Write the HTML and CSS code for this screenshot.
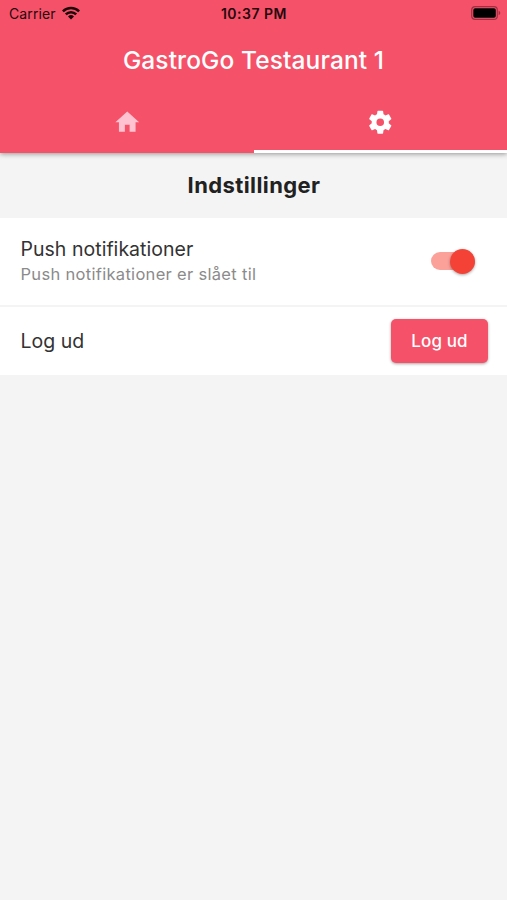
FILE: index.html
```html
<!DOCTYPE html>
<html lang="da">
<head>
<meta charset="utf-8">
<meta name="viewport" content="width=device-width, initial-scale=1">
<title>Indstillinger</title>
<link rel="stylesheet" href="styles.css">
</head>
<body>
<header class="app-bar">
  <div class="status">
    <div class="carrier"><span>Carrier</span>
      <svg class="wifi" viewBox="0 0 18 14" fill="none" stroke="#1d060a" stroke-width="2.5"><path d="M.9 5.3a11.5 11.5 0 0 1 16.2 0M3.8 8.4a7.3 7.3 0 0 1 10.4 0"/><path d="M9 13.6 6 10.5a4.3 4.3 0 0 1 6 0z" fill="#1d060a" stroke="none"/></svg>
    </div>
    <time class="clock">10:37 PM</time>
    <svg class="battery" viewBox="0 0 30 14"><rect x=".7" y=".7" width="25.6" height="12.6" rx="3.4" fill="none" stroke="#9b3143" stroke-width="1.2"/><rect x="2.3" y="2.2" width="22.5" height="9.6" rx="1.8" fill="#000"/><path d="M27.6 4.8c2.2.7 2.2 3.7 0 4.4z" fill="#9b3143"/></svg>
  </div>
  <h1 class="title"><span>GastroGo Testaurant 1</span></h1>
  <nav class="tabs">
    <a class="tab"><svg class="tab-icon" viewBox="0 0 24 24"><path d="M10 20v-6h4v6h5v-8h3L12 3 2 12h3v8z"/></svg></a>
    <a class="tab active"><svg class="tab-icon" viewBox="0 0 24 24"><path d="M19.14 12.94c.04-.3.06-.61.06-.94 0-.32-.02-.64-.07-.94l2.03-1.58c.18-.14.23-.41.12-.61l-1.92-3.32c-.12-.22-.37-.29-.59-.22l-2.39.96c-.5-.38-1.03-.7-1.62-.94l-.36-2.54c-.04-.24-.24-.41-.48-.41h-3.84c-.24 0-.43.17-.47.41l-.36 2.54c-.59.24-1.13.57-1.62.94l-2.39-.96c-.22-.08-.47 0-.59.22L2.74 8.87c-.12.21-.08.47.12.61l2.03 1.58c-.05.3-.09.63-.09.94s.02.64.07.94l-2.03 1.58c-.18.14-.23.41-.12.61l1.92 3.32c.12.22.37.29.59.22l2.39-.96c.5.38 1.03.7 1.62.94l.36 2.54c.05.24.24.41.48.41h3.84c.24 0 .44-.17.47-.41l.36-2.54c.59-.24 1.13-.56 1.62-.94l2.39.96c.22.08.47 0 .59-.22l1.92-3.32c.12-.22.07-.47-.12-.61zM12 15.2a3.2 3.2 0 1 1 0-6.4 3.2 3.2 0 0 1 0 6.4z"/></svg></a>
  </nav>
</header>
<main>
  <h2 class="heading"><span>Indstillinger</span></h2>
  <section class="row row-push">
    <div class="labels">
      <div class="label push-label">Push notifikationer</div>
      <div class="sub">Push notifikationer er slået til</div>
    </div>
    <div class="switch" role="switch" aria-checked="true"><div class="thumb"></div></div>
  </section>
  <section class="row row-logout">
    <div class="label">Log ud</div>
    <button class="button">Log ud</button>
  </section>
</main>
</body>
</html>
```
FILE: styles.css
```css
* { box-sizing: border-box; }
body {
  margin: 0;
  min-height: 900px;
  background: #f4f4f4;
  color: #333;
  font-family: Inter, "Liberation Sans", sans-serif;
}
.app-bar {
  position: relative;
  height: 153px;
  background: #f55269;
  box-shadow: 0 1px 5px rgba(0, 0, 0, .4);
}
.status {
  display: grid;
  grid-template-columns: 1fr auto 1fr;
  align-items: center;
  height: 27px;
  padding: 0 7px 0 9px;
  color: #26080d;
}
.carrier {
  display: flex;
  align-items: center;
  gap: 6px;
  font-size: 14px;
  letter-spacing: .1px;
}
.wifi { width: 18px; height: 14px; margin-top: -2px; }
.clock { margin-right: 1px; font-size: 14px; font-weight: 600; letter-spacing: .5px; }
.battery { width: 30px; height: 14px; justify-self: end; margin: -1px -1px 0 0; }
.title {
  margin: 0;
  height: 66px;
  line-height: 66px;
  text-align: center;
  color: #fff;
  font-size: 24.5px;
  font-weight: 500;
  letter-spacing: .1px;
}
.tabs { display: flex; height: 60px; }
.tab {
  flex: 1;
  display: flex;
  align-items: center;
  justify-content: center;
  border-bottom: 3px solid transparent;
}
.tab-icon { width: 28.5px; height: 28.5px; margin-top: 1px; fill: #ffc2d0; }
.tab.active { border-color: #fff; }
.active .tab-icon { fill: #fff; }
.heading {
  margin: 0;
  height: 65px;
  padding-left: 1px;
  line-height: 64px;
  text-align: center;
  color: #212121;
  font-size: 22px;
  font-weight: 650;
  letter-spacing: .4px;
}
.row {
  display: flex;
  align-items: center;
  justify-content: space-between;
  padding-left: 20.5px;
  background: #fff;
}
.row-push { height: 89px; padding-right: 32px; border-bottom: 2px solid #f4f4f4; }
.row-logout { height: 68px; padding-right: 19px; }
.labels { margin-top: -2px; }
.label { font-size: 19.5px; line-height: 26px; }
.push-label { letter-spacing: .03px; }
.sub { font-size: 16.5px; line-height: 24px; color: #8b8b8b; letter-spacing: .31px; }
.switch {
  display: flex;
  align-items: center;
  justify-content: flex-end;
  width: 44px;
  height: 18px;
  margin-top: -1px;
  border-radius: 9px;
  background: #fba19a;
}
.thumb {
  flex: none;
  width: 25px;
  height: 25px;
  border-radius: 50%;
  background: #f44336;
  box-shadow: 0 1px 3px rgba(0, 0, 0, .35);
}
.button {
  width: 97px;
  height: 44px;
  margin-top: -1px;
  padding: 0;
  border: 0;
  border-radius: 5px;
  background: #f55269;
  box-shadow: 0 1px 3px rgba(0, 0, 0, .35);
  color: #fff;
  font: 500 17px Inter, "Liberation Sans", sans-serif;
  letter-spacing: .1px;
}
```
